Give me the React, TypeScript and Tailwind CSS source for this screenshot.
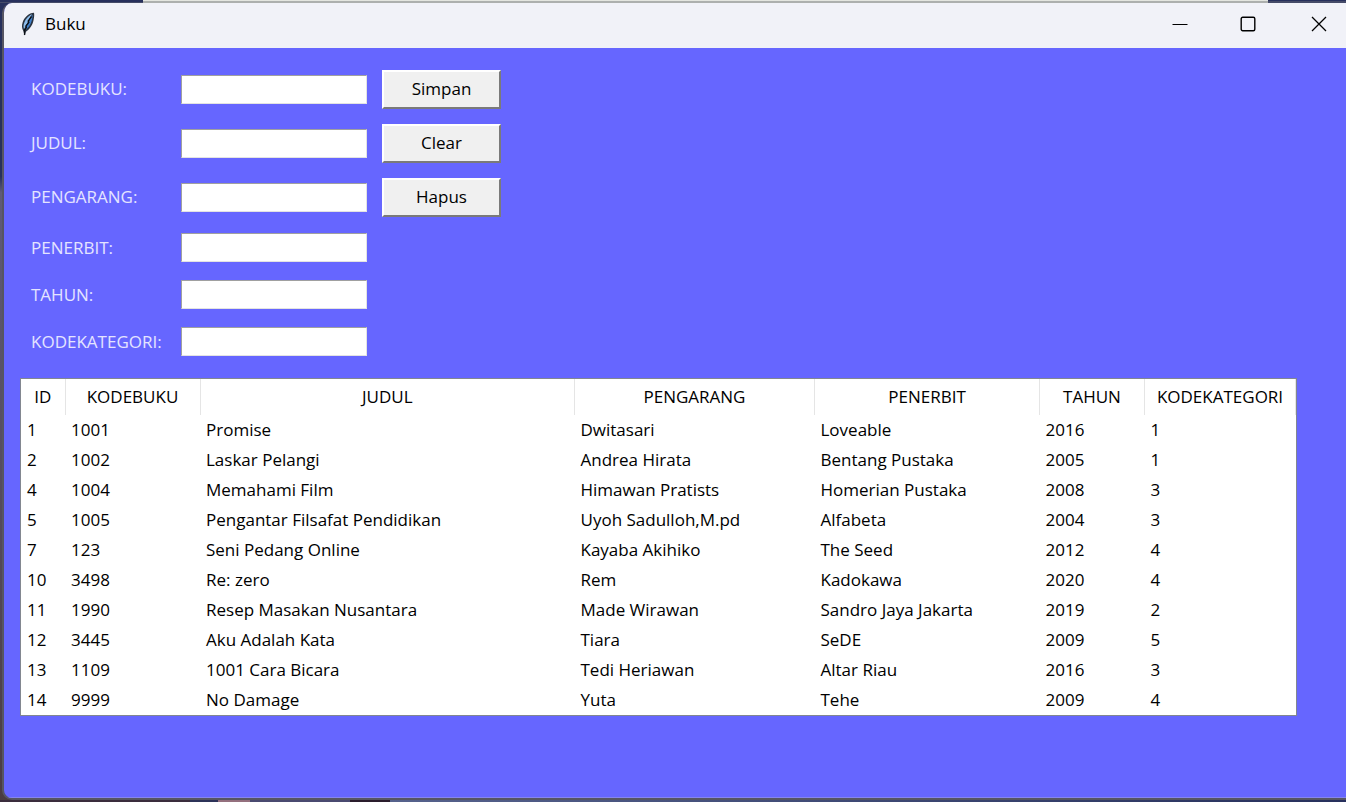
const fields = [
  { id: 'kodebuku', label: 'KODEBUKU:', action: 'Simpan' },
  { id: 'judul', label: 'JUDUL:', action: 'Clear' },
  { id: 'pengarang', label: 'PENGARANG:', action: 'Hapus' },
  { id: 'penerbit', label: 'PENERBIT:' },
  { id: 'tahun', label: 'TAHUN:' },
  { id: 'kodekategori', label: 'KODEKATEGORI:' },
];

const columns = [
  { name: 'ID', width: 'w-[44px]' },
  { name: 'KODEBUKU', width: 'w-[135px]' },
  { name: 'JUDUL', width: '' },
  { name: 'PENGARANG', width: 'w-[240px]' },
  { name: 'PENERBIT', width: 'w-[225px]' },
  { name: 'TAHUN', width: 'w-[105px]' },
  { name: 'KODEKATEGORI', width: 'w-[151px]' },
];

const books = [
  ['1', '1001', 'Promise', 'Dwitasari', 'Loveable', '2016', '1'],
  ['2', '1002', 'Laskar Pelangi', 'Andrea Hirata', 'Bentang Pustaka', '2005', '1'],
  ['4', '1004', 'Memahami Film', 'Himawan Pratists', 'Homerian Pustaka', '2008', '3'],
  ['5', '1005', 'Pengantar Filsafat Pendidikan', 'Uyoh Sadulloh,M.pd', 'Alfabeta', '2004', '3'],
  ['7', '123', 'Seni Pedang Online', 'Kayaba Akihiko', 'The Seed', '2012', '4'],
  ['10', '3498', 'Re: zero', 'Rem', 'Kadokawa', '2020', '4'],
  ['11', '1990', 'Resep Masakan Nusantara', 'Made Wirawan', 'Sandro Jaya Jakarta', '2019', '2'],
  ['12', '3445', 'Aku Adalah Kata', 'Tiara', 'SeDE', '2009', '5'],
  ['13', '1109', '1001 Cara Bicara', 'Tedi Heriawan', 'Altar Riau', '2016', '3'],
  ['14', '9999', 'No Damage', 'Yuta', 'Tehe', '2009', '4'],
];

function Feather() {
  return (
    <svg viewBox="0 0 16 24" className="h-6 w-4" aria-hidden="true">
      <path d="M14 .8C9 .8 4.200 5.500 2.600 10.500c-1 3-.8 6 .8 8.700L4.600 23.500l1.300-3.800C10.500 17 12.800 12 13.600 8c.5-2.500.9-5 .4-7.200z" fill="#2b3440" />
      <path d="M12 2.200C8.500 3.500 5 7.500 3.800 12c-.5 2-.4 3.800.3 5.300L12 2.200z" fill="#8dbdec" />
      <path d="M12.600 2.500C12.600 8 10.500 14 6.200 17.500L5 16.500 12.600 2.500z" fill="#3f80cb" />
      <path d="M11.500 4.500L8.200 9l.6 1.500L6 14l.3 1.500L4.600 18v5" fill="none" stroke="#0c1016" strokeWidth="1.400" />
    </svg>
  );
}

function TitleBar() {
  return (
    <header className="flex h-[45px] items-center justify-between bg-[#f1f2f8] pb-[3px] pl-4">
      <div className="flex items-center gap-[9px]">
        <Feather />
        <h1 className="text-[17px] leading-6 text-black">Buku</h1>
      </div>
      <div className="flex h-full">
        <button aria-label="Minimize" className="flex w-12 items-center justify-center">
          <svg viewBox="0 0 16 16" className="size-4" stroke="#000" fill="none"><path d="M.5 8.500h15" /></svg>
        </button>
        <button aria-label="Maximize" className="flex w-[88px] items-center justify-center">
          <svg viewBox="0 0 16 16" className="size-4" stroke="#000" strokeWidth="1.400" fill="none"><rect x="1.200" y="1.200" width="13.600" height="13.600" rx="1.500" /></svg>
        </button>
        <button aria-label="Close" className="flex w-[54px] items-center justify-center">
          <svg viewBox="0 0 16 16" className="size-4" stroke="#000" strokeWidth="1.300" fill="none"><path d="M1 1l14 14M15 1L1 15" /></svg>
        </button>
      </div>
    </header>
  );
}

function BookForm() {
  return (
    <form className="flex flex-col px-4" onSubmit={(e) => e.preventDefault()}>
      {fields.map((f) => (
        <div key={f.id} className={f.action ? 'flex h-[54px] items-center' : 'flex h-[47px] items-center'}>
          <label htmlFor={f.id} className="w-[161px] pl-[11px] text-[#e4e4ff]">{f.label}</label>
          <input
            id={f.id}
            type="text"
            className="h-[29px] w-[186px] border border-t-[#a0a0a0] border-r-[#e3e3e3] border-b-[#e3e3e3] border-l-[#a0a0a0] bg-white px-1 text-black outline-none"
          />
          {f.action && (
            <button
              type="button"
              className="ml-[15px] h-[39px] w-[119px] border-2 border-t-white border-r-[#7a7a7a] border-b-[#7a7a7a] border-l-white bg-[#f0f0f0] text-black"
            >
              {f.action}
            </button>
          )}
        </div>
      ))}
    </form>
  );
}

function BookTable() {
  return (
    <div className="mt-[13px] mr-[49px] ml-4 border border-[#828790] bg-white">
      <table className="w-full table-fixed border-collapse text-black">
        <thead>
          <tr className="h-9">
            {columns.map((c) => (
              <th key={c.name} scope="col" className={`${c.width} border-r border-[#e5e5e5] p-0 text-center font-normal`}>
                {c.name}
              </th>
            ))}
          </tr>
        </thead>
        <tbody>
          {books.map((row) => (
            <tr key={row[0]} className="h-[30px]">
              {row.map((cell, i) => (
                <td key={i} className="truncate py-0 pr-0 pl-[6px]">{cell}</td>
              ))}
            </tr>
          ))}
        </tbody>
      </table>
    </div>
  );
}

export default function App() {
  return (
    <div className="flex min-h-screen flex-col bg-linear-to-b from-[#27305c] from-22% via-[#5f5a78] via-24% to-[#4a3c42] font-['Open_Sans','Noto_Sans',sans-serif] text-[17px] leading-6">
      <div className="flex h-[3px]">
        <div className="w-[143px] border-b border-[#454b68] bg-[#27305c]" />
        <div className="flex-1 border-b-2 border-[#adb0ae] bg-[#e4e6e0]" />
        <div className="w-[78px] border-b-2 border-[#454b68] bg-[#27305c]" />
      </div>
      <main className="ml-[2px] flex flex-1 flex-col overflow-hidden rounded-l-[10px] border-b-2 border-l-2 border-[#565563] bg-[#6666ff]">
        <TitleBar />
        <div className="flex-1 border-b border-[#8585ee] pt-[14px]">
          <BookForm />
          <BookTable />
        </div>
      </main>
      <div className="flex h-[2px]">
        <div className="w-[190px] bg-[#3a2c3c]" />
        <div className="w-[28px] bg-[#2c3258]" />
        <div className="w-[32px] bg-[#94707e]" />
        <div className="w-[100px] bg-[#4a4a70]" />
        <div className="w-[40px] bg-[#2a1c2c]" />
        <div className="flex-1 bg-linear-to-r from-[#56628c] to-[#27305c]" />
      </div>
    </div>
  );
}
